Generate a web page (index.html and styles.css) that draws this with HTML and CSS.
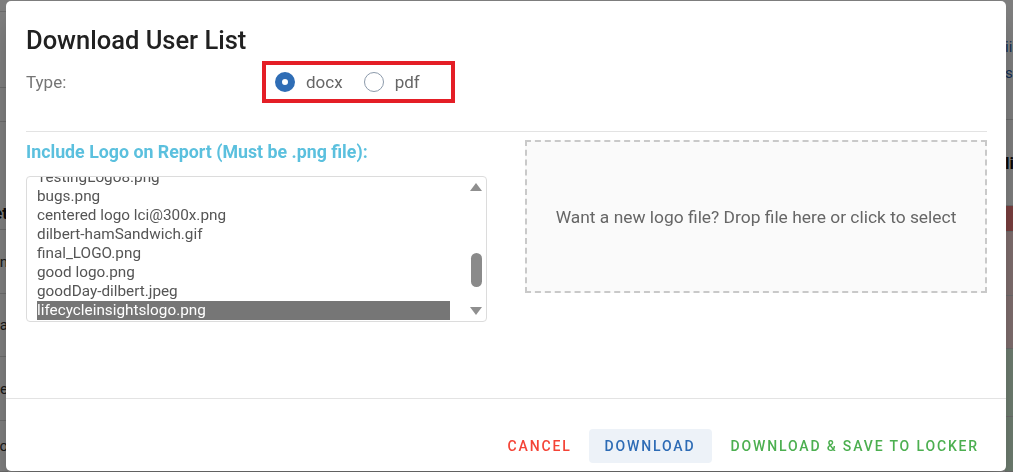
FILE: index.html
```html
<!DOCTYPE html>
<html lang="en">
<head>
  <meta charset="UTF-8" />
  <title>Download User List</title>
  <link rel="stylesheet" href="styles.css">
</head>
<body>

  <div class="page">
    <div class="strip strip-left">
      <div class="row row-a"></div>
      <div class="row row-b"></div>
      <div class="row row-c"></div>
      <div class="row row-d"><span class="bold">Det</span></div>
      <div class="row row-e"><span>Assign</span></div>
      <div class="row row-f"><span>Java</span></div>
      <div class="row row-g"><span>Inactive</span></div>
      <div class="row row-h"><span>Demo</span></div>
    </div>
    <div class="strip strip-right">
      <div class="row row-r1"><span class="link">ii</span><span class="link">ss</span></div>
      <div class="row row-r2"><span class="bold">li</span></div>
      <div class="row row-r3 red"></div>
      <div class="row row-r4 pink"></div>
      <div class="row row-r5 pink"></div>
      <div class="row row-r6 green"></div>
      <div class="row row-r7 green"></div>
    </div>
  </div>

  <div class="backdrop">
    <div class="dialog">
      <div class="dialog-body">
        <h2 class="dialog-title">Download User List</h2>

        <div class="type-row">
          <span class="type-label">Type:</span>
          <div class="radio-group">
            <label class="radio checked"><span class="radio-dot"></span>docx</label>
            <label class="radio"><span class="radio-dot"></span>pdf</label>
          </div>
        </div>

        <hr class="divider">

        <div class="logo-row">
          <div class="logo-col">
            <div class="logo-label">Include Logo on Report (Must be .png file):</div>
            <div class="file-list">
              <div class="file-items">
                <div class="file-item">TestingLogo8.png</div>
                <div class="file-item">bugs.png</div>
                <div class="file-item">centered logo lci@300x.png</div>
                <div class="file-item">dilbert-hamSandwich.gif</div>
                <div class="file-item">final_LOGO.png</div>
                <div class="file-item">good logo.png</div>
                <div class="file-item">goodDay-dilbert.jpeg</div>
                <div class="file-item selected">lifecycleinsightslogo.png</div>
              </div>
              <div class="scrollbar">
                <span class="arrow arrow-up"></span>
                <span class="thumb"></span>
                <span class="arrow arrow-down"></span>
              </div>
            </div>
          </div>
          <div class="dropzone">Want a new logo file? Drop file here or click to select</div>
        </div>
      </div>

      <div class="dialog-actions">
        <button class="btn btn-cancel">Cancel</button>
        <button class="btn btn-download">Download</button>
        <button class="btn btn-save">Download &amp; Save to Locker</button>
      </div>
    </div>
  </div>

</body>
</html>
```

FILE: styles.css
```css
/* Base */
body {
  margin: 0;
  font-family: Roboto, 'Liberation Sans', sans-serif;
  background: #fff;
  height: 100vh;
  overflow: hidden;
}

/* Page behind the dialog */
.page {
  display: flex;
  justify-content: space-between;
  height: 100vh;
  font-size: 15px;
  color: #333;
}
.strip {
  width: 8px;
  display: flex;
  flex-direction: column;
  overflow: hidden;
}
.strip-left {
  align-items: flex-end;
}
.row {
  width: 100%;
  flex: none;
  border-bottom: 1px solid #d8d8d8;
  display: flex;
  align-items: center;
  white-space: nowrap;
}
.strip-left .row {
  justify-content: flex-end;
}
.row .bold {
  font-weight: 700;
  font-size: 17px;
  color: #111;
}
.row .link {
  color: #2a5fa8;
  display: block;
}
.row-a { height: 11px; }
.row-b { height: 75px; }
.row-c { height: 33px; }
.row-d { height: 108px; align-items: flex-end; padding-bottom: 6px; box-sizing: border-box; }
.row-e { height: 63px; }
.row-f { height: 62px; }
.row-g { height: 63px; }
.row-h { flex: 1; }

.row-r1 { height: 119px; flex-direction: column; align-items: flex-start; justify-content: center; gap: 8px; }
.row-r2 { height: 85px; }
.row-r3 { height: 25px; }
.row-r4 { height: 63px; }
.row-r5 { height: 52px; }
.row-r6 { height: 67px; }
.row-r7 { flex: 1; }
.red { background: #f47e7e; }
.pink { background: #fedcdc; }
.green { background: #dcfae0; }

/* Modal */
.backdrop {
  position: fixed;
  inset: 0;
  background: rgba(0, 0, 0, 0.5);
  display: flex;
  align-items: center;
  justify-content: center;
  padding: 0 7px 0 6px;
}
.dialog {
  width: 1000px;
  flex: none;
  height: 470px;
  background: #fff;
  border-radius: 5px;
  display: flex;
  flex-direction: column;
  box-shadow: 0 11px 15px -7px rgba(0,0,0,0.2), 0 24px 38px 3px rgba(0,0,0,0.14);
}
.dialog-body {
  flex: 1;
  padding: 25px 19px 0 20px;
}
.dialog-title {
  margin: 0;
  font-size: 25.5px;
  font-weight: 500;
  color: #212121;
  line-height: 29px;
}

/* Type */
.type-row {
  display: flex;
  align-items: center;
  margin-top: 6px;
}
.type-label {
  width: 236px;
  font-size: 17px;
  color: #757575;
}
.radio-group {
  display: flex;
  align-items: center;
  gap: 21px;
  border: 4px solid #e41e26;
  padding: 0 31px 0 9px;
  height: 34px;
}
.radio {
  display: flex;
  align-items: center;
  gap: 11px;
  font-size: 17px;
  color: #666;
}
.radio-dot {
  width: 20px;
  height: 20px;
  box-sizing: border-box;
  border-radius: 50%;
  border: 1px solid #8c9aab;
  background: #fff;
}
.radio.checked .radio-dot {
  border: 7px solid #2f6db5;
}

.divider {
  border: none;
  border-top: 1px solid #e3e3e3;
  margin: 28px 0 0;
}

/* Logo */
.logo-row {
  display: grid;
  grid-template-columns: 461px 1fr;
  column-gap: 38px;
  margin-top: 8px;
  align-items: start;
}
.logo-label {
  font-size: 17.8px;
  font-weight: 700;
  color: #5bc0de;
  line-height: 20px;
  margin-top: 2px;
}
.file-list {
  margin-top: 14px;
  height: 144px;
  border: 1px solid #dcdcdc;
  border-radius: 4px;
  display: flex;
  overflow: hidden;
}
.file-items {
  flex: 1;
  padding: 0 16px 0 10px;
  margin-top: -9px;
}
.file-item {
  font-size: 15.3px;
  line-height: 19px;
  color: #555;
  white-space: nowrap;
}
.file-item.selected {
  background: #767676;
  color: #fff;
}
.scrollbar {
  width: 20px;
  display: flex;
  flex-direction: column;
  align-items: center;
  padding: 6px 0;
  box-sizing: border-box;
}
.arrow {
  width: 0;
  height: 0;
  border-left: 6px solid transparent;
  border-right: 6px solid transparent;
}
.arrow-up {
  border-bottom: 8px solid #8f8f8f;
}
.arrow-down {
  border-top: 8px solid #8f8f8f;
  margin-top: 20px;
}
.thumb {
  width: 11px;
  height: 35px;
  border-radius: 6px;
  background: #8a8a8a;
  margin-top: 62px;
}

.dropzone {
  height: 153px;
  box-sizing: border-box;
  border: 2px dashed #c9c9c9;
  background: #fafafa;
  display: flex;
  align-items: center;
  justify-content: center;
  font-size: 17.4px;
  color: #666;
}

/* Actions */
.dialog-actions {
  border-top: 1px solid #e3e3e3;
  display: flex;
  justify-content: flex-end;
  align-items: flex-start;
  gap: 9px;
  padding: 30px 19px 0;
  height: 73px;
  box-sizing: border-box;
}
.btn {
  font-family: inherit;
  font-size: 14px;
  font-weight: 500;
  letter-spacing: 1.85px;
  text-transform: uppercase;
  border: none;
  background: none;
  height: 34px;
  padding: 0 8px;
  border-radius: 4px;
  cursor: pointer;
}
.btn-cancel { color: #f44336; }
.btn-download {
  color: #2d6bb5;
  background: #edf2f8;
  padding: 0 16px;
}
.btn-save { color: #4caf50; margin-left: 2px; }
```
